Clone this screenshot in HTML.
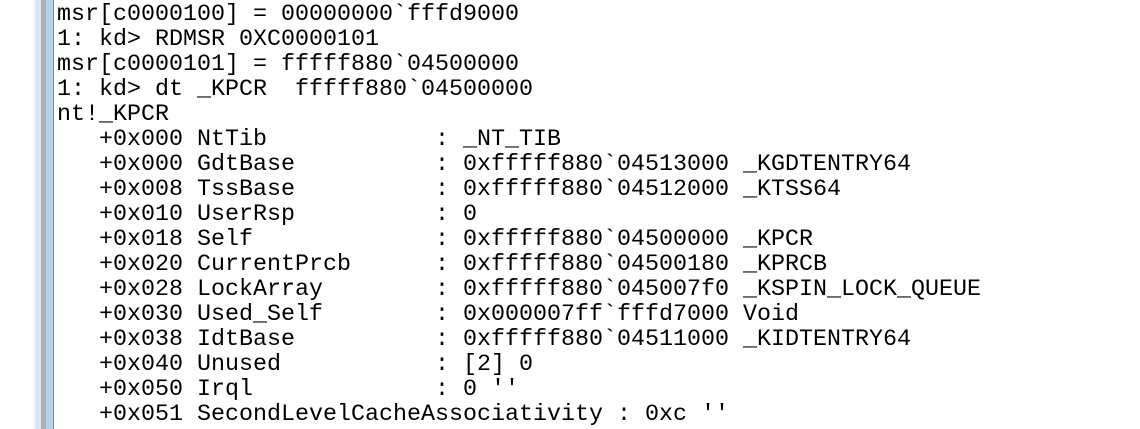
<!DOCTYPE html>
<html><head><style>
html,body{margin:0;padding:0;width:1140px;height:429px;overflow:hidden;background:#fff}
.b1{position:absolute;left:34px;top:0;width:2px;height:429px;background:#e8eef6}
.b2{position:absolute;left:36px;top:0;width:5px;height:429px;background:#dbe5f2}
.b3{position:absolute;left:41px;top:0;width:5px;height:429px;background:#b0b0b0}
.b4{position:absolute;left:46px;top:0;width:7px;height:429px;background:#b9d0ea}
.b5{position:absolute;left:53px;top:0;width:1px;height:429px;background:#8090a8}
pre{position:absolute;left:57px;top:3px;margin:0;font-family:"Liberation Mono",monospace;font-size:23.33px;line-height:25px;color:#000}
</style></head><body>
<div class="b1"></div><div class="b2"></div><div class="b3"></div><div class="b4"></div><div class="b5"></div>
<pre>msr[c0000100] = 00000000`fffd9000
1: kd&gt; RDMSR 0XC0000101
msr[c0000101] = fffff880`04500000
1: kd&gt; dt _KPCR  fffff880`04500000
nt!_KPCR
   +0x000 NtTib            : _NT_TIB
   +0x000 GdtBase          : 0xfffff880`04513000 _KGDTENTRY64
   +0x008 TssBase          : 0xfffff880`04512000 _KTSS64
   +0x010 UserRsp          : 0
   +0x018 Self             : 0xfffff880`04500000 _KPCR
   +0x020 CurrentPrcb      : 0xfffff880`04500180 _KPRCB
   +0x028 LockArray        : 0xfffff880`045007f0 _KSPIN_LOCK_QUEUE
   +0x030 Used_Self        : 0x000007ff`fffd7000 Void
   +0x038 IdtBase          : 0xfffff880`04511000 _KIDTENTRY64
   +0x040 Unused           : [2] 0
   +0x050 Irql             : 0 ''
   +0x051 SecondLevelCacheAssociativity : 0xc ''</pre>
</body></html>
